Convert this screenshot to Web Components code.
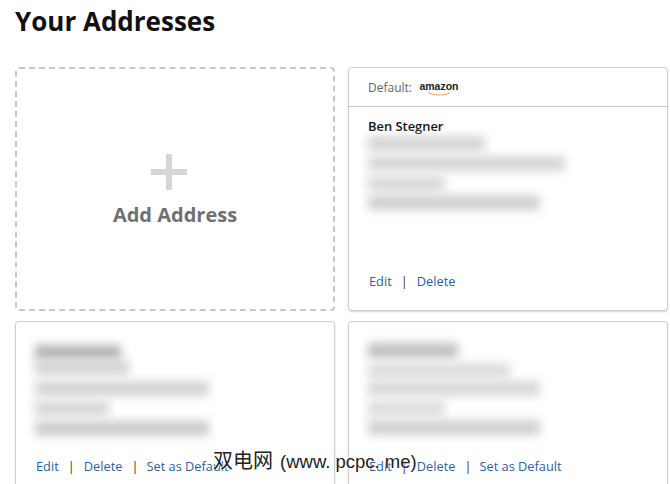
<!DOCTYPE html>
<html lang="en"><head><meta charset="utf-8"><title>Your Addresses</title>
<style>
html,body{margin:0;padding:0;background:#fff}
body{width:670px;height:484px;overflow:hidden;font-family:"Open Sans","Noto Sans",sans-serif}
</style></head><body>
<address-page>
  <add-tile></add-tile>
  <address-card default>
    <span slot="name">Ben Stegner</span>
    <blur-lines lines="117:15:d4:2 , 197:15:d6:5 , 77:15:d8:5 , 172:15:d0:4"></blur-lines>
    <card-actions></card-actions>
  </address-card>
  <address-card>
    <blur-lines lines="86:15:b4:2 , 94:15:d4:0 , 174:15:d4:6 , 74:15:d6:5 , 174:15:cc:5"></blur-lines>
    <card-actions setdefault></card-actions>
  </address-card>
  <address-card>
    <blur-lines lines="90:15:c0:0 , 142:15:dc:5 , 172:15:d8:3 , 77:15:dc:5 , 172:15:d0:4"></blur-lines>
    <card-actions setdefault></card-actions>
  </address-card>
  <water-mark>双电网<span style="font-size:18.5px;margin-left:7px">(www. pcpc. me)</span></water-mark>
</address-page>
<script>
function def(name, html, init){
  customElements.define(name, class extends HTMLElement{
    constructor(){super();this.attachShadow({mode:'open'}).innerHTML=html;}
    connectedCallback(){ if(init) init.call(this,this.shadowRoot); }
  });
}
def('address-page',`<style>
:host{display:block;position:relative;width:670px;height:484px;padding:0 0 0 15px;box-sizing:border-box;overflow:hidden}
h1{margin:0;font:700 26px/42px "Open Sans",sans-serif;color:#111;height:67px}
.grid{display:grid;grid-template-columns:320px 320px;grid-template-rows:244px 175px;gap:10px 13px}
</style><h1>Your Addresses</h1><div class="grid"><slot></slot></div>`);
def('add-tile',`<style>
:host{display:flex;flex-direction:column;align-items:center;box-sizing:border-box;border:2px dashed #c8c8c8;border-radius:4px;padding-top:85px}
svg{display:block;margin-left:-12px}
span{font:700 20px/26px "Open Sans",sans-serif;color:#707070;margin-top:12px}
</style><svg width="36" height="36" viewBox="0 0 36 36"><path d="M15 0h6v15h15v6H21v15h-6V21H0v-6h15z" fill="#d6d6d6"/></svg><span>Add Address</span>`);
def('address-card',`<style>
:host{display:flex;flex-direction:column;box-sizing:border-box;border:1px solid #cfcfcf;border-radius:4px;box-shadow:0 1px 2px rgba(0,0,0,.18);background:#fff;overflow:hidden}
.head{display:flex;align-items:center;height:38px;padding:0 19px;border-bottom:1px solid #c8c8c8;font:12px "Open Sans",sans-serif;color:#666;gap:8px}
.head[hidden]{display:none}
.body{flex:1;display:flex;flex-direction:column;padding:11px 20px 0 19px}
.name{font:600 12.9px/17px "Open Sans",sans-serif;color:#111}
.name:empty{display:none}
svg{display:block}
b{font:700 10.5px/11px "Liberation Sans",sans-serif;color:#222}
.logo{display:flex;flex-direction:column;align-items:center;width:38px;margin-top:2px}
</style><div class="head" id="h">Default:<span class="logo"><b>amazon</b><svg width="24" height="4" viewBox="0 0 24 4"><path d="M1 0.5C6 3.5 17 4 23 1" fill="none" stroke="#e2a24a" stroke-width="1"/></svg></span></div>
<div class="body"><div class="name"><slot name="name"></slot></div><slot></slot></div>`,
function(r){ if(!this.hasAttribute('default')){ r.getElementById('h').hidden=true; r.querySelector('.body').style.paddingTop='22px'; } });
def('blur-lines',`<style>
:host{display:flex;flex-direction:column;flex:1;margin-top:-1px}
i{display:block;filter:blur(5px)}
</style><div id="w"></div>`,function(r){
  const w=r.getElementById('w');
  this.getAttribute('lines').split(',').forEach(s=>{
    const [width,h,c,m]=s.trim().split(':');
    const e=document.createElement('i');
    e.style.cssText=`width:${width}px;height:${h}px;margin-top:${m}px;background:#${c}${c}${c}`;
    w.append(e);
  });
});
def('card-actions',`<style>
:host{display:flex;align-items:center;height:18px;margin:0 0 20px 1px;flex:none;font:12.8px/18px "Open Sans",sans-serif;color:#555}
a{color:#2b5f9e;text-decoration:none}
span{margin:0 9px;color:#333}
#s{margin-right:8px}
</style><a href="#">Edit</a><span>|</span><a href="#">Delete</a><span id="s">|</span><a id="d" href="#">Set as Default</a>`,function(r){
  if(!this.hasAttribute('setdefault')){r.getElementById('s').remove();r.getElementById('d').remove();}
});
def('water-mark',`<style>
:host{position:absolute;left:213px;top:449px;font:20px/24px "Liberation Sans","Noto Sans CJK SC",sans-serif;color:#222;white-space:nowrap;text-shadow:0 0 2px #fff,0 0 2px #fff}
</style><slot></slot>`);
</script>
</body></html>
